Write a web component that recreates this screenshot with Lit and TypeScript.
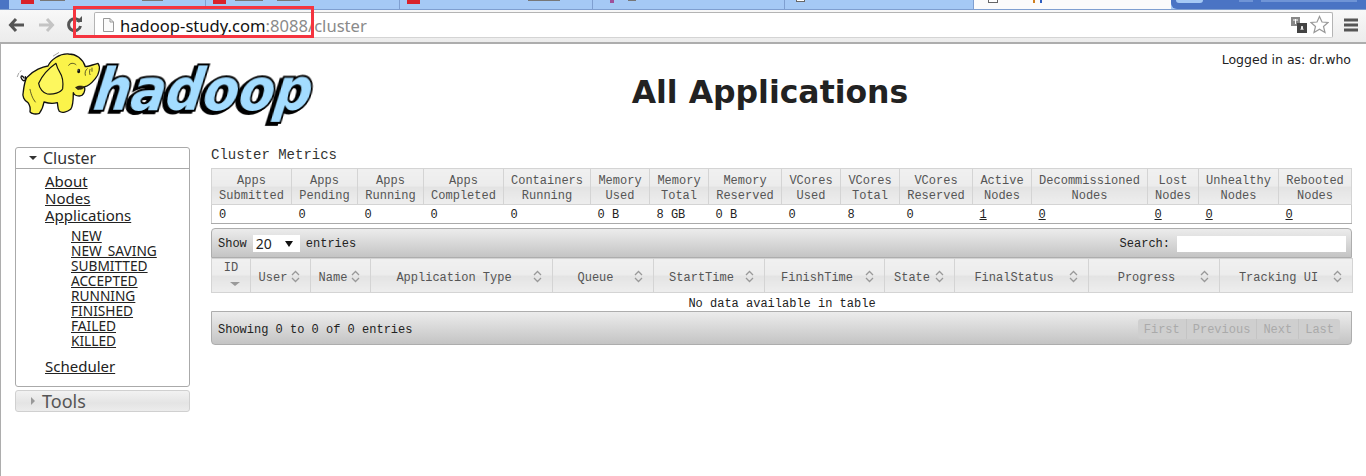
import { LitElement, html, css, svg } from 'lit';
import { customElement } from 'lit/decorators.js';
import { styleMap } from 'lit/directives/style-map.js';

const metricCols = [
  { w: 80, h: ['Apps', 'Submitted'], v: '0' },
  { w: 66, h: ['Apps', 'Pending'], v: '0' },
  { w: 66, h: ['Apps', 'Running'], v: '0' },
  { w: 80, h: ['Apps', 'Completed'], v: '0' },
  { w: 87, h: ['Containers', 'Running'], v: '0' },
  { w: 59, h: ['Memory', 'Used'], v: '0 B' },
  { w: 59, h: ['Memory', 'Total'], v: '8 GB' },
  { w: 73, h: ['Memory', 'Reserved'], v: '0 B' },
  { w: 59, h: ['VCores', 'Used'], v: '0' },
  { w: 59, h: ['VCores', 'Total'], v: '8' },
  { w: 73, h: ['VCores', 'Reserved'], v: '0' },
  { w: 59, h: ['Active', 'Nodes'], v: '1', link: true },
  { w: 116, h: ['Decommissioned', 'Nodes'], v: '0', link: true },
  { w: 51, h: ['Lost', 'Nodes'], v: '0', link: true },
  { w: 80, h: ['Unhealthy', 'Nodes'], v: '0', link: true },
  { w: 73, h: ['Rebooted', 'Nodes'], v: '0', link: true },
];

const appCols = [
  { w: 39, label: 'ID' },
  { w: 60, label: 'User' },
  { w: 60, label: 'Name' },
  { w: 182, label: 'Application Type' },
  { w: 101, label: 'Queue' },
  { w: 111, label: 'StartTime' },
  { w: 120, label: 'FinishTime' },
  { w: 70, label: 'State' },
  { w: 134, label: 'FinalStatus' },
  { w: 131, label: 'Progress' },
  { w: 133, label: 'Tracking UI' },
];

const appStates = ['NEW', 'NEW_SAVING', 'SUBMITTED', 'ACCEPTED', 'RUNNING', 'FINISHED', 'FAILED', 'KILLED'];

const tabs = [
  { cls: 'first', icon: 'red', bits: [[31, 25], [133, 21]] },
  { cls: 't2', icon: 'red', bits: [[29, 28], [71, 23]] },
  { cls: 't3', icon: 'red', bits: [[128, 32]] },
  { cls: 't4', icon: 'purple', bits: [[35, 8]] },
  { cls: 't5', icon: 'page', bits: [] },
];

const sortIcon = svg`<svg class="sort" width="9" height="13" viewBox="0 0 9 13"><path d="M1 5 4.500 1.500 8 5M1 8 4.500 11.500 8 8" fill="none" stroke="#999" stroke-width="1.3"/></svg>`;

@customElement('app-root')
export class AppRoot extends LitElement {
  static styles = css`
    :host {
      display: block;
      width: 1366px;
      height: 476px;
      overflow: hidden;
      position: relative;
      background: #fff;
      font-family: "Liberation Mono", monospace;
      color: #222;
    }
    .tabstrip {
      display: flex;
      height: 10px;
      background: #a5c9f5;
      border-bottom: 1px solid #7f9fd0;
      box-sizing: border-box;
      overflow: hidden;
    }
    .corner { width: 9px; background: #4a74c4; }
    .tab {
      position: relative;
      box-sizing: border-box;
      border-right: 1px solid #7f9fd0;
    }
    .tab.first { width: 197px; }
    .tab.t2 { width: 194px; }
    .tab.t3 { width: 193px; }
    .tab.t4 { width: 192px; }
    .tab.t5 { width: 189px; }
    .tab .ico { position: absolute; top: 0; left: 7px; width: 13px; height: 4px; background: #d9222a; }
    .tab.first .ico { left: 12px; }
    .tab .ico.purple { left: 17px; width: 4px; height: 3px; background: #a0509a; }
    .tab .ico.page { left: 11px; width: 9px; height: 2px; background: #fff; border: 1px solid #666; border-top: 0; }
    .tab .bit { position: absolute; top: 0; height: 1px; background: #777; }
    .active-tab {
      width: 197px;
      background: #fbfbfb;
      position: relative;
      margin-bottom: -1px;
    }
    .active-tab .page-ico { position: absolute; top: 0; left: 14px; width: 8px; height: 2px; border: 1px solid #666; border-top: 0; background: #fff; }
    .active-tab .fav { position: absolute; top: 0; left: 59px; width: 5px; height: 3px; border-left: 2px solid #d08020; border-right: 2px solid #3060c0; }
    .window-btns {
      flex: 1;
      background: #4a74c4;
      border-radius: 0 0 0 6px;
      display: flex;
      gap: 8px;
      align-items: flex-start;
      padding-left: 5px;
    }
    .window-btns span { height: 2px; background: #6f94d6; }
    .window-btns .light { width: 27px; background: #a5c9f5; height: 3px; border-radius: 0 0 3px 3px; margin-right: 28px; }
    .window-btns .b2 { width: 14px; }
    .window-btns .b3 { width: 96px; }

    .toolbar {
      display: flex;
      align-items: center;
      height: 34px;
      box-sizing: border-box;
      padding-bottom: 3px;
      background: linear-gradient(#f8f8f8, #ececec);
      border-bottom: 2px solid #adadad;
    }
    .nav-btns { display: flex; width: 94px; align-items: center; padding-left: 8px; box-sizing: border-box; }
    .nav-btns svg { margin-right: 11px; flex: none; }
    .address {
      width: 1239px;
      height: 26px;
      box-sizing: border-box;
      background: #fff;
      border: 1px solid #b4b4b4;
      border-bottom-color: #d4d4d4;
      border-radius: 2px;
      display: flex;
      align-items: center;
      padding: 0 3px 0 8px;
      font: 16.6px "Noto Sans", sans-serif;
    }
    .address .url { margin-left: 6px; color: #111; flex: 1; white-space: nowrap; padding-top: 1px; }
    .address .url span { color: #8a8a8a; }
    .address .translate { margin-right: 3px; }
    .menu { margin-left: 11px; }
    .annotation {
      position: absolute;
      left: 73px;
      top: 6px;
      width: 241px;
      height: 32px;
      box-sizing: border-box;
      border: 3px solid #f5343f;
    }

    .page {
      border-left: 1px solid #adadad;
      height: 432px;
      box-sizing: border-box;
    }
    .header { display: flex; height: 103px; }
    .logo { width: 319px; flex: none; }
    .logo svg { display: block; margin: 2px 0 0 9px; overflow: visible; }
    .wordmark {
      font: italic bold 58px "DejaVu Sans", sans-serif;
      fill: #a3dcff;
      stroke: #000;
      stroke-width: 4px;
      paint-order: stroke;
      filter: drop-shadow(-3px 2px 0 #000);
    }
    h1 {
      flex: 1;
      margin: 0;
      padding-top: 28px;
      text-align: center;
      font: bold 31.5px/40px "DejaVu Sans", sans-serif;
      color: #222;
    }
    .logged {
      width: 146px;
      flex: none;
      box-sizing: border-box;
      padding: 9px 15px 0 0;
      text-align: right;
      font: 12.5px/14px "DejaVu Sans", sans-serif;
      white-space: nowrap;
    }

    .body { display: flex; align-items: flex-start; }
    .side { width: 175px; margin-left: 14px; flex: none; font-family: "Noto Sans", sans-serif; }
    .box { border: 1px solid #aaa; border-radius: 3px; box-sizing: border-box; }
    .box-head { display: flex; align-items: center; height: 21px; box-sizing: border-box; padding: 0 0 1px 13px; font-size: 16px; color: #333; }
    .box-head i { width: 0; height: 0; margin-right: 6px; border-left: 4px solid transparent; border-right: 4px solid transparent; border-top: 4px solid #333; }
    .cluster .box-head { border-bottom: 1px solid #aaa; }
    .side a { color: #222; text-decoration: underline; }
    .links { height: 217px; padding: 4px 0 0 29px; box-sizing: border-box; font-size: 15px; line-height: 17px; }
    .links div { height: 17px; }
    .states { margin: 4px 0 10px; padding-left: 26px; font-size: 13.7px; line-height: 15px; }
    .states div { height: 15px; }
    .links .states { height: 120px; }
    .tools {
      margin-top: 3px;
      height: 22px;
      background: linear-gradient(#f2f2f2, #e4e4e4 60%, #ececec);
      border-color: #d0d0d0;
    }
    .tools .box-head { color: #555; font-size: 18px; padding-left: 13px; padding-bottom: 2px; }
    .tools .box-head i { margin-right: 7px; border-top: 4px solid transparent; border-bottom: 4px solid transparent; border-left: 4px solid #999; border-right: 0; margin-left: 2px; }

    .main { margin-left: 21px; width: 1141px; flex: none; }
    .caption { font-size: 14px; line-height: 16px; color: #333; height: 21px; }
    table { border-collapse: collapse; table-layout: fixed; width: 1141px; font-size: 12px; }
    th {
      font-weight: normal;
      color: #555;
      background: linear-gradient(#f0f0f0, #ececec 48%, #e3e3e3 50%, #eeeeee);
      border: 1px solid #d4d4d4;
      padding: 0;
      line-height: 15px;
      white-space: nowrap;
    }
    .metrics th { height: 35px; padding-top: 5px; box-sizing: border-box; }
    .metrics td {
      height: 18px;
      padding: 3px 0 0 7px;
      box-sizing: border-box;
      border-bottom: 1px solid #aaa;
      line-height: 15px;
      color: #222;
    }
    .metrics td:first-child { border-left: 1px solid #ccc; }
    .metrics td:last-child { border-right: 1px solid #ccc; }
    .metrics td a { color: #222; text-decoration: underline; }
    .bar {
      display: flex;
      align-items: center;
      justify-content: space-between;
      box-sizing: border-box;
      border: 1px solid #adadad;
      background: linear-gradient(#ececec, #c4c4c4);
      padding: 1px 5px 0 6px;
      color: #222;
      font-size: 12px;
    }
    .bar.top { height: 30px; margin-top: 4px; border-radius: 4px 4px 0 0; }
    .bar.bottom { height: 34px; border-radius: 0 0 4px 4px; }
    .show { display: flex; align-items: center; }
    .select {
      display: flex;
      align-items: center;
      justify-content: space-between;
      width: 47px;
      height: 17px;
      margin: 0 6px;
      padding: 0 7px 0 3px;
      box-sizing: border-box;
      background: #fff;
      font: 14px "Noto Sans", sans-serif;
      color: #222;
    }
    .select i { width: 0; height: 0; border-left: 4px solid transparent; border-right: 4px solid transparent; border-top: 6px solid #111; }
    .search { display: flex; align-items: center; gap: 7px; }
    .search span { display: block; width: 169px; height: 16px; background: #fff; }
    .apps th { height: 34px; padding-top: 5px; box-sizing: border-box; }
    .apps th:first-child { padding-top: 0; vertical-align: top; }
    .th-in { display: grid; grid-template-columns: 1fr 9px; align-items: center; justify-items: center; padding: 0 10px 0 4px; }
    .th-in .sort { margin-top: -3px; }
    .sorted { display: flex; flex-direction: column; align-items: center; gap: 6px; padding-top: 2px; }
    .sorted i { width: 0; height: 0; margin-left: 8px; border-left: 5px solid transparent; border-right: 5px solid transparent; border-top: 4px solid #999; }
    .apps td { height: 18px; padding: 4px 0 0; box-sizing: border-box; text-align: center; color: #222; line-height: 14px; }
    .status { padding-top: 2px; }
    .pager { display: flex; margin-right: 6px; }
    .pager span { padding: 0 6px; line-height: 22px; height: 20px; color: #aaa; background: #cfcfcf; border-left: 1px solid #c4c4c4; }
    .pager span:first-child { border-left: 0; border-radius: 3px 0 0 3px; }
    .pager span:last-child { border-radius: 0 3px 3px 0; }
  `;

  renderElephant() {
    return svg`
      <g transform="translate(10 46) scale(.3333)" stroke="#111" stroke-linejoin="round" stroke-linecap="round">
        <path d="M42 96C34 84 30 92 36 100C42 108 48 104 46 92" fill="none" stroke-width="4"/>
        <path d="M22 92 26 82M30 78 33 74M130 30 146 20" fill="none" stroke="#777" stroke-width="2"/>
        <path fill="#fbf34a" stroke-width="4" d="M50 95C70 72 100 62 114 60C122 42 148 22 176 24C198 24 218 38 226 62C236 62 248 56 264 52C272 62 268 84 256 98C246 110 232 122 224 122C226 134 222 150 208 150C198 150 192 146 190 140C190 160 188 182 182 190C172 198 156 202 148 196C142 188 144 178 142 170C128 174 114 172 102 168C100 180 96 192 88 202C78 206 64 204 60 198C62 186 60 178 54 170C42 164 36 150 40 136C42 120 44 106 50 95Z"/>
        <path fill="#fdf75e" stroke-width="3.500" d="M138 52C118 66 96 90 86 112C88 128 100 142 112 144C130 146 152 140 158 128C160 110 158 92 150 80C144 70 140 60 138 52Z"/>
        <path fill="#3a2a10" stroke-width="2" d="M198 124C204 118 216 120 222 122C222 128 214 130 208 130C204 132 200 130 198 124Z"/>
        <path d="M176 58C180 50 192 50 198 56M232 68C226 72 224 80 226 88M240 70C238 76 238 82 240 86M246 66 246 76M60 130C64 150 70 160 76 168" fill="none" stroke-width="2"/>
        <ellipse cx="206" cy="75" rx="4.500" ry="7" fill="#111" stroke="none"/>
        <circle cx="204" cy="72" r="1.600" fill="#fff" stroke="none"/>
      </g>
      <text class="wordmark" x="0" y="0" transform="translate(92 110) skewX(-8)" textLength="218" lengthAdjust="spacingAndGlyphs">hadoop</text>
    `;
  }

  render() {
    return html`
      <div class="tabstrip">
        <div class="corner"></div>
        ${tabs.map(t => html`
          <div class="tab ${t.cls}">
            <div class="ico ${t.icon}"></div>
            ${t.bits.map(b => html`<div class="bit" style=${styleMap({ left: b[0] + 'px', width: b[1] + 'px' })}></div>`)}
          </div>
        `)}
        <div class="active-tab"><div class="page-ico"></div><div class="fav"></div></div>
        <div class="window-btns"><span class="light"></span><span class="b2"></span><span class="b3"></span></div>
      </div>
      <div class="toolbar">
        <div class="nav-btns">
          <svg width="18" height="16" viewBox="0 0 18 16"><path d="M8 2 2.500 8 8 14M3 8H16" fill="none" stroke="#555" stroke-width="3"/></svg>
          <svg width="18" height="16" viewBox="0 0 18 16"><path d="M10 2 15.500 8 10 14M15 8H2" fill="none" stroke="#c4c4c4" stroke-width="3"/></svg>
          <svg width="17" height="17" viewBox="0 0 17 17"><path d="M14 6A6 6 0 1 0 14.500 10" fill="none" stroke="#555" stroke-width="3"/><path d="M10 6H16V0Z" fill="#555"/></svg>
        </div>
        <div class="address">
          <svg width="11" height="14" viewBox="0 0 11 14"><path d="M.5.500H7L10.500 4V13.500H.5Z" fill="#fbfbfb" stroke="#999"/><path d="M7 .5V4H10.500" fill="none" stroke="#999"/></svg>
          <div class="url">hadoop-study.com<span>:8088/cluster</span></div>
          <svg class="translate" width="16" height="16" viewBox="0 0 16 16"><rect x="0" y="0" width="9" height="9" fill="#888"/><rect x="6" y="6" width="10" height="10" fill="#444"/><path d="M2 3H7M4.500 2V7M10 13 11 9 12 13" stroke="#fff" fill="none" stroke-width="1"/></svg>
          <svg width="19" height="19" viewBox="0 0 19 19"><path d="M9.500 1.500 12 7 18 7.500 13.500 11.500 15 17.500 9.500 14.300 4 17.500 5.500 11.500 1 7.500 7 7Z" fill="#fff" stroke="#999" stroke-width="1.200"/></svg>
        </div>
        <svg class="menu" width="14" height="14" viewBox="0 0 14 14"><path d="M0 2H14M0 7H14M0 12H14" stroke="#555" stroke-width="3"/></svg>
      </div>
      <div class="annotation"></div>

      <div class="page">
        <div class="header">
          <div class="logo">
            <svg width="310" height="85" viewBox="10 46 310 85">${this.renderElephant()}</svg>
          </div>
          <h1>All Applications</h1>
          <div class="logged">Logged in as: dr.who</div>
        </div>
        <div class="body">
          <div class="side">
            <div class="box cluster">
              <div class="box-head"><i></i>Cluster</div>
              <div class="links">
                <div><a>About</a></div>
                <div><a>Nodes</a></div>
                <div><a>Applications</a></div>
                <div class="states">
                  ${appStates.map(s => html`<div><a>${s}</a></div>`)}
                </div>
                <div><a>Scheduler</a></div>
              </div>
            </div>
            <div class="box tools"><div class="box-head"><i></i>Tools</div></div>
          </div>
          <div class="main">
            <div class="caption">Cluster Metrics</div>
            <table class="metrics">
              <colgroup>${metricCols.map(c => html`<col style=${styleMap({ width: c.w + 'px' })} />`)}</colgroup>
              <thead><tr>${metricCols.map(c => html`<th>${c.h[0]}<br />${c.h[1]}</th>`)}</tr></thead>
              <tbody><tr>${metricCols.map(c => html`<td>${c.link ? html`<a>${c.v}</a>` : c.v}</td>`)}</tr></tbody>
            </table>
            <div class="bar top">
              <div class="show">Show<div class="select">20<i></i></div>entries</div>
              <div class="search">Search:<span></span></div>
            </div>
            <table class="apps">
              <colgroup>${appCols.map(c => html`<col style=${styleMap({ width: c.w + 'px' })} />`)}</colgroup>
              <thead><tr>${appCols.map((c, i) => html`<th>
                ${i === 0
                  ? html`<div class="sorted">${c.label}<i></i></div>`
                  : html`<div class="th-in"><span>${c.label}</span>${sortIcon}</div>`}
              </th>`)}</tr></thead>
              <tbody><tr><td colspan="11">No data available in table</td></tr></tbody>
            </table>
            <div class="bar bottom">
              <div class="status">Showing 0 to 0 of 0 entries</div>
              <div class="pager"><span>First</span><span>Previous</span><span>Next</span><span>Last</span></div>
            </div>
          </div>
        </div>
      </div>
    `;
  }
}
